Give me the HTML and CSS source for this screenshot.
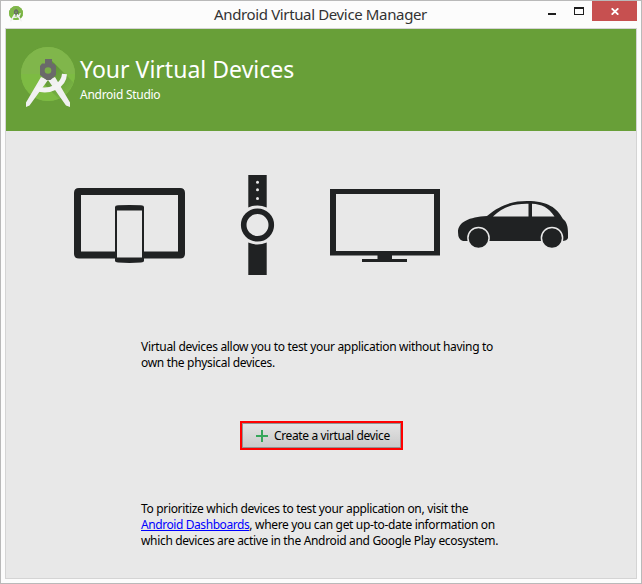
FILE: index.html
```html
<!DOCTYPE html>
<html lang="en">
<head>
<meta charset="utf-8">
<title>Android Virtual Device Manager</title>
<link rel="stylesheet" href="styles.css">
</head>
<body>
<svg class="defs" width="0" height="0" aria-hidden="true">
  <defs>
    <clipPath id="disc"><circle cx="27" cy="27" r="27"/></clipPath>
    <linearGradient id="shade" gradientUnits="userSpaceOnUse" x1="30" y1="20" x2="50" y2="42">
      <stop offset="0" stop-color="#5f9436"/>
      <stop offset="1" stop-color="#78b244"/>
    </linearGradient>
    <symbol id="studio" viewBox="0 0 54 61">
      <circle cx="27" cy="27" r="27" fill="#7db848"/>
      <g clip-path="url(#disc)">
        <path d="M0 0H54V27H0Z" fill="#80b64b"/>
        <path d="M0 27H54V54H0Z" fill="#7dbb43"/>
        <path d="M31 14L54 37V54H40L24 38Z" fill="url(#shade)"/>
      </g>
      <path d="M20 30L5 55.500V60L8.500 58.500L27 33ZM34 30L49 55.500V60L45 58.500L27 33Z" fill="#f0f0f0"/>
      <path d="M15.500 41.500Q25 45 34 40.500Q43 36 43.500 27" fill="none" stroke="#f3f3f3" stroke-width="5"/>
      <path d="M24 12H31V16.500H33L35 19V28L29.500 33H25.500L19 28V19L21 16.500H24Z" fill="#6a6a6a"/>
      <circle cx="27" cy="23.500" r="3.300" fill="#7aae49"/>
    </symbol>
  </defs>
</svg>
<div class="window">
  <header class="titlebar">
    <svg class="app-icon" viewBox="0 0 54 61"><use href="#studio"/></svg>
    <h1 class="title">Android Virtual Device Manager</h1>
    <div class="controls">
      <svg class="minimize" viewBox="0 0 8 2"><path d="M0 0H8V2H0Z" fill="#1d1d1d"/></svg>
      <svg class="maximize" viewBox="0 0 10 8"><path d="M0 0H10V8H0ZM1 2V7H9V2Z" fill="#1d1d1d" fill-rule="evenodd"/></svg>
      <div class="close"><svg viewBox="0 0 8 7"><path d="M.7 .3L7.300 6.700M7.300 .3L.7 6.700" stroke="#fff" stroke-width="1.800"/></svg></div>
    </div>
  </header>
  <main class="content">
    <section class="banner">
      <svg class="logo" viewBox="0 0 54 61"><use href="#studio"/></svg>
      <div>
        <h2 class="heading"><span>Your Virtual Devices</span></h2>
        <p class="product"><span>Android Studio</span></p>
      </div>
    </section>
    <div class="body">
      <svg class="devices" viewBox="73 174 497 103" fill="#202223">
        <path fill-rule="evenodd" d="M79 188H180Q185 188 185 193V253.500Q185 258.500 180 258.500H79Q74 258.500 74 253.500V193Q74 188 79 188ZM81 195V251.500H178V195Z"/>
        <path d="M115 207Q115 205.500 118 205.300Q129.500 204.700 141 205.300Q144 205.500 144 207V261Q144 262.300 141 262.500Q129.500 263.300 118 262.500Q115 262.300 115 261Z"/>
        <path d="M117 210.500H142V257.500H117Z" fill="#e8e8e8"/>
        <path d="M248.300 175H266.700V207.500Q257.500 203.500 248.300 207.500ZM248.300 242.500Q257.500 246.500 266.700 242.500V275H248.300Z"/>
        <circle cx="257.500" cy="225" r="13.800" fill="none" stroke="#202223" stroke-width="5.600"/>
        <g fill="#e8e8e8"><circle cx="257.500" cy="182.300" r="1.500"/><circle cx="257.500" cy="189.800" r="1.500"/><circle cx="257.500" cy="198.400" r="1.500"/></g>
        <path fill-rule="evenodd" d="M330 189H440V255.600H392V259H407V262H362V259H377.500V255.600H330ZM336 194V251H434V194Z"/>
        <path fill-rule="evenodd" d="M458 232C458 222 469 217 487 216C501 204 514 201 527 201C548 201 557 208 563 219C567 222 568 227 568 233V238Q567 241 562 241H463Q458 240 458 232ZM493 216.500H528.500V203.800C513 203.500 503 207 493 216.500ZM532 216.500H554.500C548 207 542 204.500 532 203.800Z"/>
        <g stroke="#e8e8e8" stroke-width="1.500"><circle cx="478.500" cy="238" r="10.600"/><circle cx="552" cy="238" r="10.600"/></g>
      </svg>
      <p class="copy intro"><span>Virtual devices allow you to test your application without having to</span><span>own the physical devices.</span></p>
      <button class="create" type="button">
        <svg viewBox="0 0 12 12"><path d="M5 0H7V5H12V7H7V12H5V7H0V5H5Z" fill="#35a65a"/></svg>
        <span>Create a virtual device</span>
      </button>
      <p class="copy note"><span>To prioritize which devices to test your application on, visit the</span><span><a href="#">Android Dashboards</a>, where you can get up-to-date information on</span><span>which devices are active in the Android and Google Play ecosystem.</span></p>
    </div>
  </main>
</div>
</body>
</html>
```

FILE: styles.css
```css
* { box-sizing: border-box; }
body { margin: 0; font-family: "Noto Sans", sans-serif; color: #000; }
h1, h2, p { margin: 0; font-weight: 400; }
svg { display: block; flex: none; }
.defs { position: absolute; }
.window {
  width: 642px; height: 584px; padding: 0 4px 4px;
  display: flex; flex-direction: column;
  border: 1px solid #b9b9b9; background: #fcfcfc;
}
.titlebar { height: 27px; flex: none; display: flex; align-items: flex-start; }
.app-icon { width: 14px; height: 16px; margin: 5px 0 0 4px; }
.title { margin-left: 191px; width: 240px; font-size: 15px; line-height: 27px; color: #333; white-space: nowrap; letter-spacing: -.36px; }
.controls { margin-left: auto; display: flex; align-items: flex-start; }
.minimize { width: 8px; height: 2px; margin: 12px 18px 0 0; }
.maximize { width: 10px; height: 8px; margin: 6px 8px 0 0; }
.close { width: 45px; height: 20px; background: #c75050; display: grid; place-items: center; }
.close svg { width: 8px; height: 7px; margin-top: 1px; }
.content { flex: 1; border: 1px solid #d4d4d4; background: #e8e8e8; }
.banner { height: 102px; padding: 18px 0 0 15px; display: flex; gap: 5px; background: #689f38; color: #fff; }
.logo { width: 54px; height: 61px; }
.heading { font-size: 23px; line-height: 33px; margin-top: 6px; letter-spacing: .02px; white-space: nowrap; }
.product { font-size: 12px; line-height: 16px; margin-top: 1px; letter-spacing: -.27px; white-space: nowrap; }
.body { display: flex; flex-direction: column; align-items: flex-start; padding: 43px 0 0 67px; }
.devices { width: 497px; height: 103px; }
.copy { margin-left: 68px; font-size: 12px; line-height: 16px; white-space: nowrap; letter-spacing: -.33px; }
.copy > span { display: block; width: max-content; }
.intro { margin-top: 62px; letter-spacing: -.315px; }
.create {
  width: 163px; height: 29px; margin: 50px 0 0 167px; padding: 0 0 0 14px;
  display: flex; align-items: center; gap: 6px;
  border: 2px solid #f00; border-radius: 0;
  background: linear-gradient(#e4e4e4, #c9c9c9);
  box-shadow: inset 0 0 0 1px #929292;
  font: 12px "Noto Sans", sans-serif; letter-spacing: -.37px; color: #000; white-space: nowrap;
}
.create svg { width: 12px; height: 12px; }
.note { margin-top: 51px; }
.note a { color: #00f; text-decoration: underline; letter-spacing: -.42px; }
```
